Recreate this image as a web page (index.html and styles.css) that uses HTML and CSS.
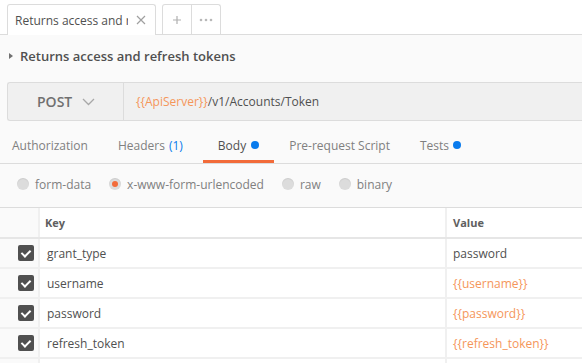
FILE: index.html
```html
<!DOCTYPE html>
<html lang="en">
<head>
  <meta charset="UTF-8">
  <title>Returns access and refresh tokens</title>
  <link rel="stylesheet" href="styles.css">
</head>
<body>

  <div class="tabbar">
    <div class="tab active">
      <span class="tab-name">Returns access and refresh tokens</span>
      <svg class="tab-close" width="10" height="10" viewBox="0 0 10 10"><path d="M1 1L9 9M9 1L1 9" stroke="#a0a0a0" stroke-width="1.2"/></svg>
    </div>
    <div class="tab-tools">
      <div class="tool">
        <svg width="10" height="10" viewBox="0 0 10 10"><path d="M5 1V9M1 5H9" stroke="#b0b0b0" stroke-width="1.2"/></svg>
      </div>
      <div class="tool">
        <svg width="14" height="4" viewBox="0 0 14 4"><circle cx="2" cy="2" r="1.3" fill="#b8b8b8"/><circle cx="7" cy="2" r="1.3" fill="#b8b8b8"/><circle cx="12" cy="2" r="1.3" fill="#b8b8b8"/></svg>
      </div>
    </div>
  </div>

  <div class="request-title">
    <svg class="caret" width="6" height="8" viewBox="0 0 6 8"><path d="M1 1L5 4L1 7Z" fill="#707070"/></svg>
    <span>Returns access and refresh tokens</span>
  </div>

  <div class="url-bar">
    <div class="method">
      <span>POST</span>
      <svg width="13" height="8" viewBox="0 0 13 8"><path d="M1 1L6.5 6.5L12 1" fill="none" stroke="#a8a8a8" stroke-width="1.3"/></svg>
    </div>
    <div class="url"><span class="var">{{ApiServer}}</span>/v1/Accounts/Token</div>
  </div>

  <div class="req-tabs">
    <div class="req-tab first">Authorization</div>
    <div class="req-tab">Headers <span class="count">(1)</span></div>
    <div class="req-tab active">Body <span class="dot"></span></div>
    <div class="req-tab">Pre-request Script</div>
    <div class="req-tab">Tests <span class="dot"></span></div>
  </div>

  <div class="body-modes">
    <label class="mode"><span class="radio"></span>form-data</label>
    <label class="mode"><span class="radio checked"></span>x-www-form-urlencoded</label>
    <label class="mode"><span class="radio"></span>raw</label>
    <label class="mode"><span class="radio"></span>binary</label>
  </div>

  <div class="params">
    <div class="row head">
      <div class="cell check"></div>
      <div class="cell key">Key</div>
      <div class="cell value">Value</div>
    </div>
    <div class="row">
      <div class="cell check"><span class="box"></span></div>
      <div class="cell key">grant_type</div>
      <div class="cell value">password</div>
    </div>
    <div class="row">
      <div class="cell check"><span class="box"></span></div>
      <div class="cell key">username</div>
      <div class="cell value var">{{username}}</div>
    </div>
    <div class="row">
      <div class="cell check"><span class="box"></span></div>
      <div class="cell key">password</div>
      <div class="cell value var">{{password}}</div>
    </div>
    <div class="row">
      <div class="cell check"><span class="box"></span></div>
      <div class="cell key">refresh_token</div>
      <div class="cell value var">{{refresh_token}}</div>
    </div>
    <div class="row">
      <div class="cell check"></div>
      <div class="cell key"></div>
      <div class="cell value"></div>
    </div>
  </div>

</body>
</html>
```

FILE: styles.css
```css
:root {
  --line: #dcdcdc;
  --soft-line: #f0f0f0;
  --text: #505050;
  --muted: #808080;
  --orange: #f26b3a;
  --var-orange: #f5965a;
  --blue: #097bed;
  --page-bg: #fafafa;
}

body {
  margin: 0;
  height: 363px;
  background: var(--page-bg);
  font-family: 'Open Sans', sans-serif;
  color: var(--text);
  overflow: hidden;
}

.tabbar {
  display: flex;
  align-items: flex-end;
  gap: 6px;
  height: 35px;
  padding-left: 7px;
  background: white;
  border-bottom: 1px solid var(--line);
  box-sizing: border-box;
}

.tab {
  display: flex;
  align-items: center;
  width: 149px;
  height: 31px;
  box-sizing: border-box;
  padding: 0 9px 0 7px;
  background: white;
  border: 1px solid var(--line);
  border-bottom: none;
  border-radius: 3px 3px 0 0;
  margin-bottom: -1px;
}

.tab-name {
  width: 113px;
  font-size: 12px;
  color: var(--text);
  white-space: nowrap;
  overflow: hidden;
}

.tab-close {
  margin-left: auto;
}

.tab-tools {
  display: flex;
  height: 30px;
  box-sizing: border-box;
  border: 1px solid var(--line);
  border-bottom: none;
  border-radius: 3px 3px 0 0;
  background: white;
}

.tool {
  display: flex;
  align-items: center;
  justify-content: center;
  width: 28px;
}

.tool + .tool {
  border-left: 1px solid var(--line);
}

.request-title {
  display: flex;
  align-items: center;
  height: 47px;
  padding: 0 0 6px 8px;
  box-sizing: border-box;
  font-size: 13px;
  font-weight: 600;
  color: var(--text);
}

.caret {
  margin-right: 6px;
}

.url-bar {
  display: flex;
  height: 39px;
  margin-left: 7px;
  box-sizing: border-box;
  background: #f0f0f0;
  border: 1px solid var(--line);
  border-right: none;
  border-radius: 3px 0 0 3px;
}

.method {
  display: flex;
  align-items: center;
  width: 116px;
  box-sizing: border-box;
  padding-left: 29px;
  gap: 10px;
  border-right: 1px solid var(--line);
  font-size: 14px;
  font-weight: 600;
  color: #707070;
}

.url {
  display: flex;
  align-items: center;
  padding-left: 12px;
  font-size: 12px;
  color: var(--text);
}

.var {
  color: var(--var-orange);
}

.req-tabs {
  display: flex;
  height: 43px;
  padding-left: 12px;
  border-bottom: 1px solid var(--line);
  box-sizing: border-box;
}

.req-tab {
  display: flex;
  align-items: center;
  gap: 4px;
  padding: 9px 15px 0;
  font-size: 12px;
  color: var(--muted);
  border-bottom: 3px solid transparent;
}

.req-tab.first {
  padding-left: 0;
}

.req-tab.active {
  gap: 5px;
  margin-left: 5px;
  color: var(--text);
  border-bottom-color: var(--orange);
}

.count {
  color: var(--blue);
}

.dot {
  width: 8px;
  height: 8px;
  border-radius: 50%;
  background: var(--blue);
}

.body-modes {
  display: flex;
  align-items: center;
  height: 43px;
  padding: 0 0 3px 17px;
  box-sizing: border-box;
  gap: 18px;
}

.mode {
  display: flex;
  align-items: center;
  gap: 6px;
  font-size: 12px;
  color: var(--muted);
}

.radio {
  width: 12px;
  height: 12px;
  border-radius: 50%;
  background: #dcdcdc;
  box-shadow: inset 0 1px 1px rgba(0, 0, 0, 0.08);
  display: flex;
  align-items: center;
  justify-content: center;
}

.radio.checked::after {
  content: '';
  width: 6px;
  height: 6px;
  border-radius: 50%;
  background: var(--orange);
}

.params {
  border-top: 1px solid var(--line);
}

.row {
  display: flex;
  height: 30px;
  box-sizing: border-box;
  border-bottom: 2px solid var(--soft-line);
}

.row.head {
  height: 31px;
  border-bottom: 2px solid #e6e6e6;
}

.cell {
  display: flex;
  align-items: center;
  box-sizing: border-box;
  font-size: 12px;
  color: var(--text);
}

.cell.check {
  width: 38px;
  justify-content: flex-end;
  padding-right: 4px;
  background: var(--page-bg);
}

.cell.key {
  flex: 1;
  padding-left: 7px;
  background: white;
  border-left: 2px solid var(--soft-line);
}

.cell.value {
  width: 137px;
  padding-left: 6px;
  background: white;
  border-left: 2px solid var(--soft-line);
}

.cell.value.var {
  color: var(--var-orange);
}

.row.head .cell {
  font-size: 11px;
  font-weight: 700;
  color: #606060;
}

.row.head .cell.key {
  padding-left: 5px;
}

.box {
  width: 16px;
  height: 16px;
  border-radius: 2px;
  background: #505050;
  position: relative;
}

.box::after {
  content: '';
  position: absolute;
  left: 5px;
  top: 3px;
  width: 4px;
  height: 7px;
  border: solid white;
  border-width: 0 2px 2px 0;
  transform: rotate(45deg);
}
```
